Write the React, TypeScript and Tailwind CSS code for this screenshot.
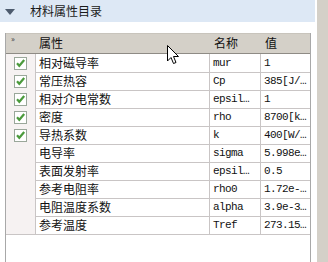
const rows = [
  { checked: true, label: "相对磁导率", name: "mur", value: "1" },
  { checked: true, label: "常压热容", name: "Cp", value: "385[J/…" },
  { checked: true, label: "相对介电常数", name: "epsil…", value: "1" },
  { checked: true, label: "密度", name: "rho", value: "8700[k…" },
  { checked: true, label: "导热系数", name: "k", value: "400[W/…" },
  { checked: false, label: "电导率", name: "sigma", value: "5.998e…" },
  { checked: false, label: "表面发射率", name: "epsil…", value: "0.5" },
  { checked: false, label: "参考电阻率", name: "rho0", value: "1.72e-…" },
  { checked: false, label: "电阻温度系数", name: "alpha", value: "3.9e-3…" },
  { checked: false, label: "参考温度", name: "Tref", value: "273.15…" },
]

const cjk = { fontFamily: '"SimSun", "Noto Sans CJK SC", sans-serif' }
const mono = { fontFamily: '"Liberation Mono", "Noto Sans CJK SC", monospace' }

function CheckBox() {
  return (
    <svg width="13" height="13" viewBox="0 0 13 13">
      <rect x="0.5" y="0.5" width="12" height="12" fill="#fff" stroke="#9aa79a" />
      <path d="M3 6.2 L5.3 8.8 L10.2 3" fill="none" stroke="#4b9a3c" strokeWidth="2.2" />
    </svg>
  )
}

export default function App() {
  return (
    <div className="w-[328px] h-[262px] flex bg-white overflow-hidden relative" style={cjk}>
      <div className="w-[315px] flex flex-col">
        {/* panel title */}
        <div className="h-[22px] bg-[#dde8f5] flex items-center">
          <svg width="10" height="6" viewBox="0 0 10 6" className="ml-[5px] mt-[2px]">
            <path d="M0 0 L10 0 L5 6 Z" fill="#4d5b6e" />
          </svg>
          <span className="ml-[15px] text-[12px] text-[#1a1a1a] leading-none">材料属性目录</span>
        </div>

        <div className="h-[11px]" />

        {/* property table */}
        <div className="ml-[5px] w-[306px] flex-1 border-l border-r border-[#a8a8a8]">
          <div className="grid grid-cols-[30px_174px_51px_1fr] h-[21px] bg-[#d4d0c8] border-t border-b border-t-[#c8c4bc] border-b-[#8e8b85] text-[12px] text-[#111]">
            <div className="relative">
              <span className="absolute left-[5px] top-[1px] text-[8px] text-[#333] leading-none">»</span>
            </div>
            <div className="flex items-end pb-[1px] pl-[3px]">属性</div>
            <div className="flex items-end pb-[1px] pl-[4px]">名称</div>
            <div className="flex items-end pb-[1px] pl-[4px]">值</div>
          </div>

          {rows.map((r, i) => (
            <div key={i} className="grid grid-cols-[30px_174px_51px_1fr] h-[18px] text-[12px] text-[#111]">
              <div className="bg-[#f6f2f2] border-r border-b border-[#c9c5c5] flex items-center justify-center">
                {r.checked && <CheckBox />}
              </div>
              <div className="border-r border-b border-[#c9c5c5] flex items-center pl-[3px]">{r.label}</div>
              <div className="border-r border-b border-[#c9c5c5] flex items-center pl-[3px] text-[11px] tracking-[-0.6px]" style={mono}>
                {r.name}
              </div>
              <div className="border-b border-[#c9c5c5] flex items-center pl-[3px] text-[11px] tracking-[-0.6px] whitespace-nowrap overflow-hidden" style={mono}>
                {r.value}
              </div>
            </div>
          ))}
        </div>
      </div>
      <div className="w-[2px] bg-white" />
      <div className="w-[11px] bg-[#d4d0c8]" />

      {/* mouse pointer */}
      <svg width="13" height="21" viewBox="0 0 13 21" className="absolute left-[167px] top-[45px]">
        <path d="M0.5 0.5 L0.5 16 L4 12.5 L6.5 18.5 L9 17.5 L6.5 11.5 L11.5 11.5 Z" fill="#fff" stroke="#000" strokeWidth="1" strokeLinejoin="round" />
      </svg>
    </div>
  )
}
